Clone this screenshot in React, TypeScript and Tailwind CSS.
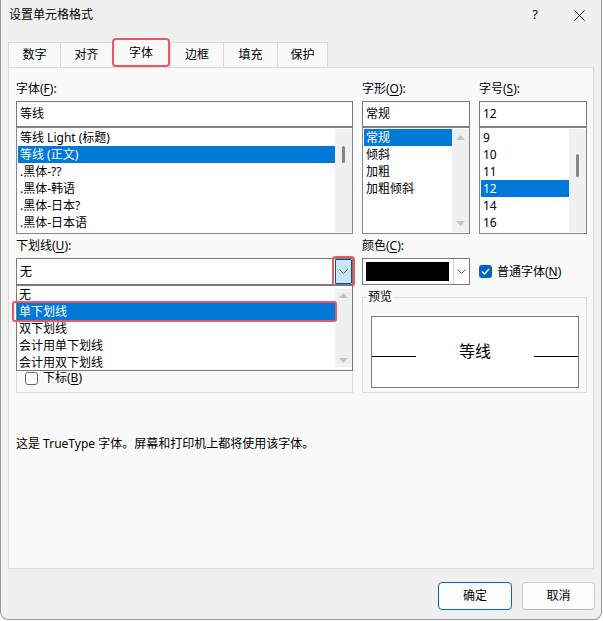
import type { ReactNode } from 'react';
import clsx from 'clsx';

const fontItems = ['等线 Light (标题)', '等线 (正文)', '.黑体-??', '.黑体-韩语', '.黑体-日本?', '.黑体-日本语'];
const styleItems = ['常规', '倾斜', '加粗', '加粗倾斜'];
const sizeItems = ['9', '10', '11', '12', '14', '16'];
const underlineItems = ['无', '单下划线', '双下划线', '会计用单下划线', '会计用双下划线'];

const tabs = [
  { label: '数字', w: 'w-[52px]' },
  { label: '对齐', w: 'w-[52px]' },
  { label: '字体', w: 'w-[58px]', active: true },
  { label: '边框', w: 'w-[53px]' },
  { label: '填充', w: 'w-[54px]' },
  { label: '保护', w: 'w-[51px]' },
];

function Mn({ children }: { children: ReactNode }) {
  return <span className="underline underline-offset-[2px]">{children}</span>;
}

function Label({ children }: { children: ReactNode }) {
  return <div className="mb-[4px] h-[16px] text-[12px] leading-[16px]">{children}</div>;
}

function UpArrow() {
  return (
    <svg width="9" height="5" viewBox="0 0 9 5" className="mx-auto">
      <path d="M0 5L4.5 0L9 5Z" fill="#c2c2c2" />
    </svg>
  );
}

function DownArrow() {
  return (
    <svg width="9" height="5" viewBox="0 0 9 5" className="mx-auto">
      <path d="M0 0L4.5 5L9 0Z" fill="#c2c2c2" />
    </svg>
  );
}

function Chevron() {
  return (
    <svg width="9" height="5" viewBox="0 0 9 5">
      <path d="M0.5 0.5L4.5 4.5L8.5 0.5" fill="none" stroke="#606060" strokeWidth="1" />
    </svg>
  );
}

function Item({ text, selected }: { text: string; selected?: boolean }) {
  return (
    <div className={clsx('h-[17px] whitespace-nowrap pl-[2px] text-[12px] leading-[17px]', selected && 'bg-[#0078d7] text-white')}>
      {text}
    </div>
  );
}

function TextBox({ value }: { value: string }) {
  return (
    <div className="flex h-[26px] items-center border border-[#7a7a7a] bg-white px-[3px] text-[12px]">{value}</div>
  );
}

export default function App() {
  return (
    <div className="h-[620px] w-[602px] rounded-b-[8px] border-x border-b border-[#9a9a9a] bg-[#f0f0f0] text-[12px] text-black [font-family:'Noto_Sans','Noto_Sans_CJK_SC',sans-serif]">
      {/* title bar */}
      <div className="flex h-[30px] items-center pl-[8px]">
        <span className="flex-1 text-[12px]">设置单元格格式</span>
        <span className="mr-[36px] text-[13px]">?</span>
        <svg width="11" height="11" viewBox="0 0 11 11" className="mr-[16px]">
          <path d="M0.5 0.5L10.5 10.5M10.5 0.5L0.5 10.5" stroke="#1a1a1a" strokeWidth="1" />
        </svg>
      </div>

      {/* tabs */}
      <div className="ml-[7px] flex h-[37px] items-end">
        {tabs.map((t, i) =>
          t.active ? (
            <div
              key={t.label}
              className={clsx(t.w, 'relative z-10 flex h-[29px] items-center justify-center rounded-[4px] border-2 border-[#ec5566] bg-[#f9f9f9]')}
            >
              {t.label}
            </div>
          ) : (
            <div
              key={t.label}
              className={clsx(
                t.w,
                'flex h-[25px] items-center justify-center border-t border-l border-[#d9d9d9] bg-[#f9f9f9]',
                i === tabs.length - 1 && 'border-r',
              )}
            >
              {t.label}
            </div>
          ),
        )}
      </div>

      {/* panel */}
      <div className="ml-[7px] h-[502px] w-[586px] border border-[#dadada] bg-[#f9f9f9] pt-[13px] pl-[7px]">
        {/* font / style / size */}
        <div className="flex gap-[9px]">
          <div className="w-[337px]">
            <Label>
              字体(<Mn>F</Mn>):
            </Label>
            <TextBox value="等线" />
            <div className="flex h-[107px] border border-[#828790] bg-white">
              <div className="flex-1 overflow-hidden pt-[1px] pl-[1px]">
                {fontItems.map((f, i) => (
                  <Item key={f} text={f} selected={i === 1} />
                ))}
              </div>
              <div className="my-[1px] w-[17px] bg-[#f0f0f0] pt-[17px]">
                <div className="mx-auto h-[17px] w-[3px] rounded-full bg-[#858585]" />
              </div>
            </div>
          </div>

          <div className="w-[108px]">
            <Label>
              字形(<Mn>O</Mn>):
            </Label>
            <TextBox value="常规" />
            <div className="flex h-[107px] border border-[#828790] bg-white">
              <div className="flex-1 overflow-hidden pt-[1px] pl-[1px]">
                {styleItems.map((s, i) => (
                  <Item key={s} text={s} selected={i === 0} />
                ))}
              </div>
              <div className="my-[1px] flex w-[17px] flex-col justify-between bg-[#f0f0f0] py-[6px]">
                <UpArrow />
                <DownArrow />
              </div>
            </div>
          </div>

          <div className="w-[108px]">
            <Label>
              字号(<Mn>S</Mn>):
            </Label>
            <TextBox value="12" />
            <div className="flex h-[107px] border border-[#828790] bg-white">
              <div className="flex-1 overflow-hidden pt-[1px] pl-[1px]">
                {sizeItems.map((s) => (
                  <Item key={s} text={s} selected={s === '12'} />
                ))}
              </div>
              <div className="my-[1px] w-[17px] bg-[#f0f0f0] pt-[25px]">
                <div className="mx-auto h-[23px] w-[3px] rounded-full bg-[#858585]" />
              </div>
            </div>
          </div>
        </div>

        {/* underline / color */}
        <div className="mt-[4px] flex gap-[9px]">
          <div className="w-[337px]">
            <Label>
              下划线(<Mn>U</Mn>):
            </Label>
            <div className="relative z-10">
              <div className="flex h-[27px] items-center border border-[#7a7a7a] bg-white pl-[3px]">
                <span className="flex-1">无</span>
                <div className="flex h-[25px] w-[17px] items-center justify-center rounded-[1px] border border-[#005499] bg-[#cce4f7] outline-2 outline-offset-[1px] outline-[#ec5566]">
                  <Chevron />
                </div>
              </div>

              {/* open dropdown */}
              <div className="absolute top-full left-0 flex h-[86px] w-[337px] border border-[#7a7a7a] bg-white">
                <div className="flex-1">
                  {underlineItems.map((u, i) =>
                    i === 1 ? (
                      <div key={u} className="relative">
                        <Item text={u} selected />
                        <div className="absolute -top-[2px] -right-[2px] -bottom-[2px] -left-[5px] rounded-[3px] border-2 border-[#ec5566]" />
                      </div>
                    ) : (
                      <Item key={u} text={u} />
                    ),
                  )}
                </div>
                <div className="my-[3px] flex w-[17px] flex-col justify-between bg-[#f0f0f0] py-[4px]">
                  <UpArrow />
                  <DownArrow />
                </div>
              </div>
            </div>

            {/* effects group, mostly covered by the dropdown */}
            <div className="mt-[12px] flex h-[96px] flex-col justify-end border border-[#dcdcdc] pb-[1px] pl-[8px]">
              <div className="flex h-[26px] items-center gap-[5px]">
                <div className="h-[13px] w-[13px] rounded-[3px] border border-[#6b6b6b] bg-white" />
                <span>
                  下标(<Mn>B</Mn>)
                </span>
              </div>
            </div>
          </div>

          <div className="w-[225px]">
            <Label>
              颜色(<Mn>C</Mn>):
            </Label>
            <div className="flex items-center">
              <div className="flex h-[27px] w-[108px] items-stretch border border-[#7a7a7a] bg-white">
                <div className="my-[3px] ml-[3px] w-[83px] bg-black" />
                <div className="ml-[4px] flex flex-1 items-center justify-center border-l border-[#d0d0d0]">
                  <Chevron />
                </div>
              </div>
              <div className="ml-[9px] flex h-[13px] w-[13px] items-center justify-center rounded-[3px] bg-[#0067c0]">
                <svg width="9" height="7" viewBox="0 0 9 7">
                  <path d="M1 3.5L3.5 6L8 1" fill="none" stroke="#fff" strokeWidth="1.3" />
                </svg>
              </div>
              <span className="ml-[5px]">
                普通字体(<Mn>N</Mn>)
              </span>
            </div>

            <fieldset className="mt-[4px] h-[104px] border border-[#dcdcdc] px-[4px]">
              <legend className="px-[1px] leading-[16px]">预览</legend>
              <div className="mt-[11px] ml-[4px] flex h-[72px] w-[208px] items-center border border-[#7a7a7a] bg-white">
                <div className="mt-[8px] h-px w-[44px] bg-black" />
                <div className="flex-1 pb-[2px] text-center text-[16px]">等线</div>
                <div className="mt-[8px] h-px w-[44px] bg-black" />
              </div>
            </fieldset>
          </div>
        </div>

        <p className="mt-[43px] leading-[16px]">这是 TrueType 字体。屏幕和打印机上都将使用该字体。</p>
      </div>

      {/* buttons */}
      <div className="mt-[13px] flex justify-end gap-[10px] pr-[6px]">
        <button className="h-[28px] w-[74px] rounded-[4px] border border-[#0067c0] bg-[#fdfdfd]">确定</button>
        <button className="h-[28px] w-[73px] rounded-[4px] border border-[#d0d0d0] border-b-[#b8b8b8] bg-[#fdfdfd]">取消</button>
      </div>
    </div>
  );
}
